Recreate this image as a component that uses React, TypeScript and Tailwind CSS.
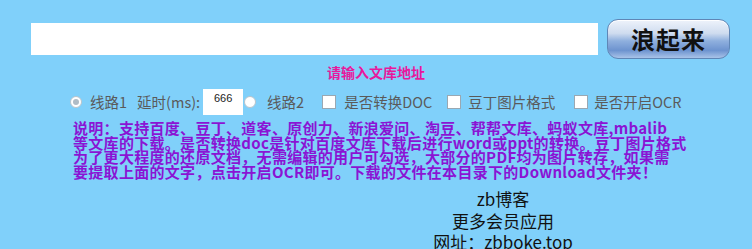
import React from "react";

const Radio = ({ checked, className = "" }: { checked?: boolean; className?: string }) => (
  <span
    className={
      "inline-flex items-center justify-center w-[12px] h-[12px] rounded-full border border-[#b8c4cc] bg-white shrink-0 " +
      className
    }
  >
    {checked ? <span className="w-[6px] h-[6px] rounded-full bg-[#b0bcc6]" /> : null}
  </span>
);

const Check = ({ className = "" }: { className?: string }) => (
  <span className={"inline-block w-[14px] h-[14px] bg-white border border-[#9aa8b2] shrink-0 " + className} />
);

export default function App() {
  const cjk = { fontFamily: '"Noto Sans CJK SC", "Noto Sans", sans-serif' };
  return (
    <div className="w-[752px] h-[249px] overflow-hidden bg-[#80d0fa] flex flex-col" style={cjk}>
      {/* top row */}
      <div className="flex items-center pt-[19px] pl-[31px]">
        <div className="w-[567px] h-[32px] bg-white" />
        <button className="ml-[9px] w-[123px] h-[40px] rounded-[11px] border border-[#5f86b6] bg-[linear-gradient(to_bottom,#eef3fb_0%,#cfdcef_35%,#8fb0de_55%,#6d93cf_80%,#a9c3e8_100%)] shadow-[inset_0_1px_0_rgba(255,255,255,0.9)] flex items-center justify-center">
          <span className="text-[24px] font-bold text-[#111] leading-none tracking-[1px]">浪起来</span>
        </button>
      </div>

      {/* pink label */}
      <div className="mt-[5px] text-center text-[14px] leading-[16px] font-bold text-[#e8189c]">请输入文库地址</div>

      {/* options row */}
      <div className="mt-[9px] flex items-center h-[26px] text-[14.5px] text-[#5a5a5a] leading-none whitespace-nowrap">
        <Radio checked className="ml-[70px]" />
        <span className="ml-[8px]">线路1</span>
        <span className="ml-[10px]">延时(ms):</span>
        <div className="ml-[3px] w-[40px] h-[26px] bg-white flex items-start justify-center pt-[4px]">
          <span className="text-[11px] text-[#222]" style={{ fontFamily: '"Liberation Sans", sans-serif' }}>666</span>
        </div>
        <Radio className="ml-[1px]" />
        <span className="ml-[11px]">线路2</span>
        <Check className="ml-[18px]" />
        <span className="ml-[8px]">是否转换DOC</span>
        <Check className="ml-[15px]" />
        <span className="ml-[7px]">豆丁图片格式</span>
        <Check className="ml-[19px]" />
        <span className="ml-[6px]">是否开启OCR</span>
      </div>

      {/* purple description */}
      <div className="mt-[6px] pl-[73px] text-[15px] tracking-[0.3px] leading-[14.5px] font-bold text-[#8a14d4] whitespace-nowrap">
        <div>说明：支持百度、豆丁、道客、原创力、新浪爱问、淘豆、帮帮文库、蚂蚁文库,mbalib</div>
        <div>等文库的下载。是否转换doc是针对百度文库下载后进行word或ppt的转换。豆丁图片格式</div>
        <div>为了更大程度的还原文档，无需编辑的用户可勾选，大部分的PDF均为图片转存，如果需</div>
        <div>要提取上面的文字，点击开启OCR即可。下载的文件在本目录下的Download文件夹！</div>
      </div>

      {/* footer text */}
      <div className="mt-[9px] pl-[254px] flex flex-col items-center text-[17px] leading-[21.5px] text-[#111]">
        <div>zb博客</div>
        <div>更多会员应用</div>
        <div>网址：zbboke.top</div>
      </div>
    </div>
  );
}
